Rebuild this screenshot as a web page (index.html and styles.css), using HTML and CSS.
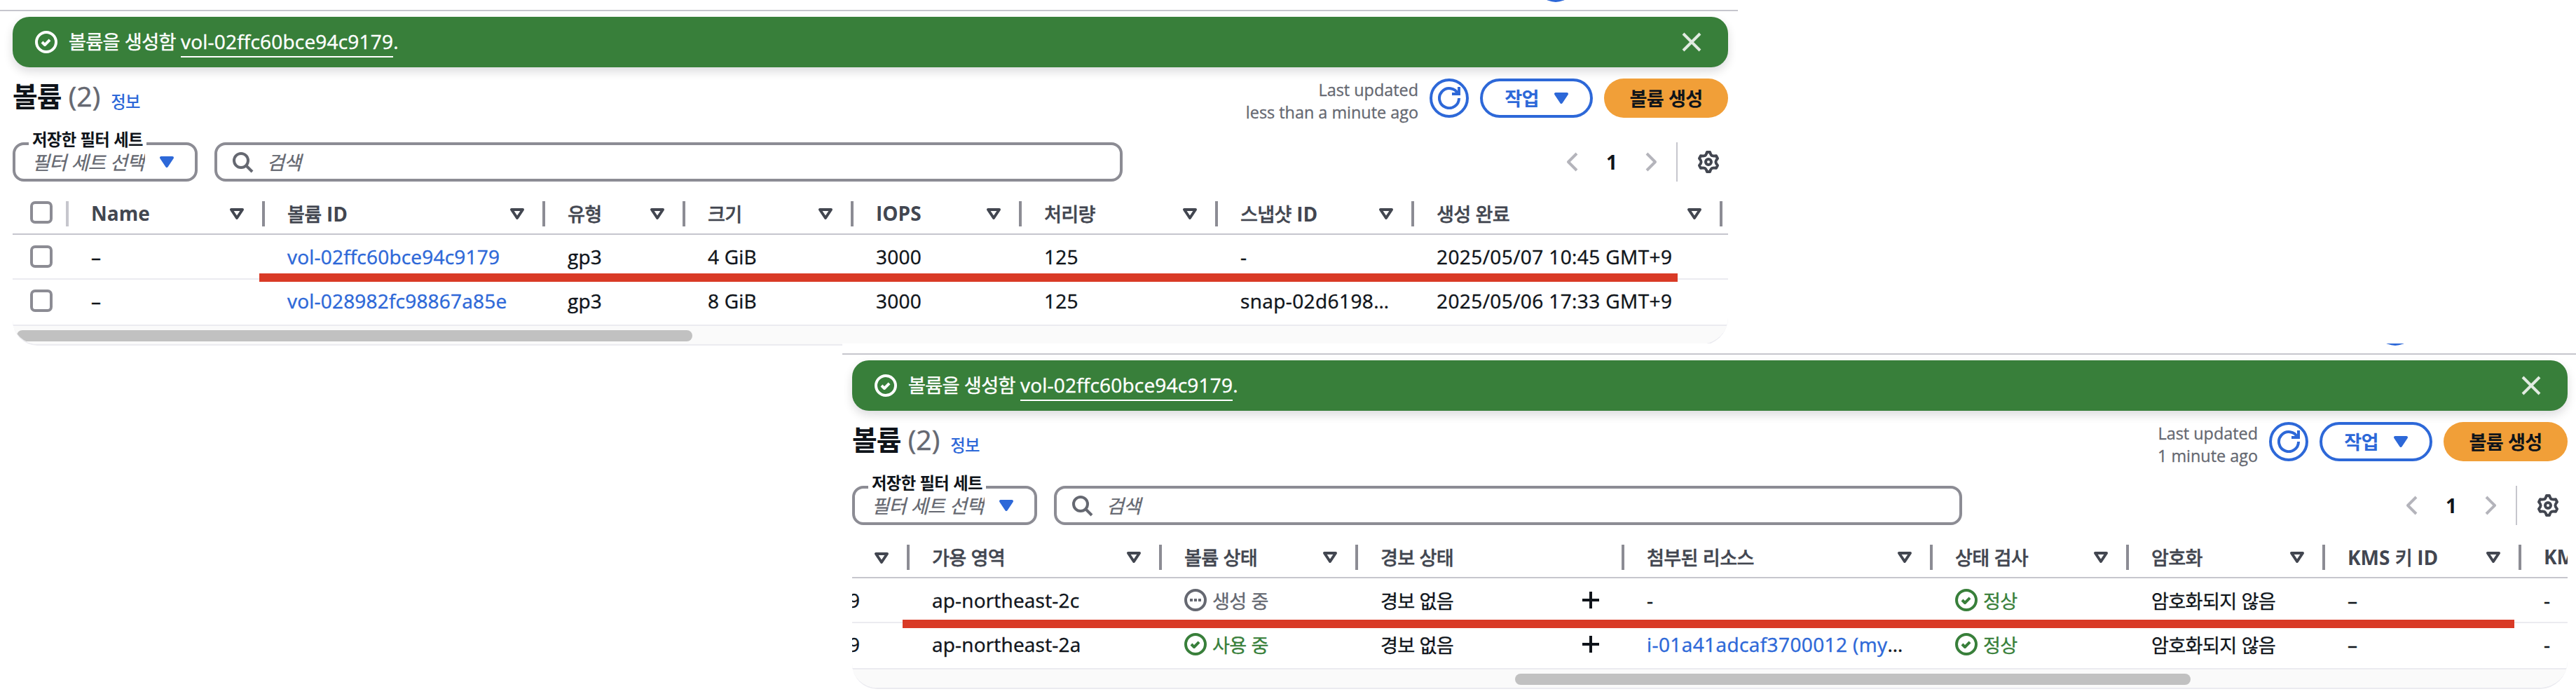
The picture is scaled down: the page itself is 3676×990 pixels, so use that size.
FILE: index.html
```
<!DOCTYPE html>
<html lang="ko">
<head>
<meta charset="utf-8">
<title>볼륨</title>
<link rel="stylesheet" href="styles.css">
</head>
<body>
<svg class="sprite" aria-hidden="true">
  <symbol id="ok" viewBox="0 0 16 16"><circle cx="8" cy="8" r="7"/><path d="m5 8 2 2 3.521-3.521" stroke-linejoin="round"/></symbol>
  <symbol id="pending" viewBox="0 0 16 16"><circle cx="8" cy="8" r="7"/><path class="solid" d="M4 7h2v2H4zM7 7h2v2H7zM10 7h2v2h-2z"/></symbol>
  <symbol id="close" viewBox="0 0 16 16"><path d="m2 2 12 12M14 2 2 14"/></symbol>
  <symbol id="refresh" viewBox="0 0 16 16"><path d="M10 5h5V0"/><path d="M15 8a7 7 0 1 1-.7-3"/></symbol>
  <symbol id="caret" viewBox="0 0 16 16"><path class="both" d="M4 5h8l-4 6z"/></symbol>
  <symbol id="sort" viewBox="0 0 16 16"><path d="M4 5h8l-4 6z" stroke-linejoin="round"/></symbol>
  <symbol id="search" viewBox="0 0 16 16"><circle cx="7" cy="7" r="5"/><path d="m15 15-4.5-4.5"/></symbol>
  <symbol id="left" viewBox="0 0 16 16"><path d="M11 2 5 8l6 6" stroke-linejoin="round"/></symbol>
  <symbol id="right" viewBox="0 0 16 16"><path d="m5 2 6 6-6 6" stroke-linejoin="round"/></symbol>
  <symbol id="plus" viewBox="0 0 16 16"><path d="M8 2v12M2 8h12"/></symbol>
  <symbol id="gear" viewBox="0 0 16 16"><path stroke-linejoin="round" d="M7 1h2Q9.8 3.3 10.6 3.5 11.4 3.9 13.5 3.6L14.5 5.5Q13.2 7.1 13.2 8T14.5 10.5L13.5 12.4Q11.4 12.1 10.6 12.5 9.8 12.7 9 15H7Q6.2 12.7 5.4 12.5 4.6 12.1 2.5 12.4L1.5 10.5Q2.8 8.9 2.8 8T1.5 5.5L2.5 3.6Q4.6 3.9 5.4 3.5 6.2 3.3 7 1z"/><circle cx="8" cy="8" r="2"/></symbol>
</svg>

<section class="panel first">
  <div class="topbar"><i class="orb"></i></div>
  <div class="flash"><svg class="ic"><use href="#ok"/></svg><p><span class="k">볼륨을 생성함</span> <a>vol-02ffc60bce94c9179</a>.</p><svg class="ic x"><use href="#close"/></svg></div>
  <header class="head">
    <h2><span class="k">볼륨</span> <em>(2)</em></h2><a class="info k">정보</a>
    <p class="updated">Last updated<br>less than a minute ago</p>
    <button class="btn round"><svg class="ic"><use href="#refresh"/></svg></button>
    <button class="btn menu"><span class="k">작업</span><svg class="ic"><use href="#caret"/></svg></button>
    <button class="btn primary"><span class="k">볼륨 생성</span></button>
  </header>
  <div class="filters">
    <div class="select"><label class="k">저장한 필터 세트</label><span class="ph k">필터 세트 선택</span><svg class="ic"><use href="#caret"/></svg></div>
    <div class="search"><svg class="ic"><use href="#search"/></svg><span class="ph k">검색</span></div>
    <nav class="pager"><svg class="ic"><use href="#left"/></svg><b>1</b><svg class="ic"><use href="#right"/></svg></nav>
    <div class="prefs"><svg class="ic"><use href="#gear"/></svg></div>
  </div>
  <div class="table">
    <div class="row th">
      <div class="check"><i></i></div>
      <div>Name<svg class="ic"><use href="#sort"/></svg></div>
      <div><span><span class="k">볼륨</span> ID</span><svg class="ic"><use href="#sort"/></svg></div>
      <div><span class="k">유형</span><svg class="ic"><use href="#sort"/></svg></div>
      <div><span class="k">크기</span><svg class="ic"><use href="#sort"/></svg></div>
      <div>IOPS<svg class="ic"><use href="#sort"/></svg></div>
      <div><span class="k">처리량</span><svg class="ic"><use href="#sort"/></svg></div>
      <div><span><span class="k">스냅샷</span> ID</span><svg class="ic"><use href="#sort"/></svg></div>
      <div><span class="k">생성 완료</span><svg class="ic"><use href="#sort"/></svg></div>
    </div>
    <div class="row">
      <div class="check"><i></i></div>
      <div>–</div><div><a>vol-02ffc60bce94c9179</a></div><div>gp3</div><div>4 GiB</div><div>3000</div><div>125</div><div>-</div><div class="date">2025/05/07 10:45 GMT+9</div>
    </div>
    <div class="row last">
      <div class="check"><i></i></div>
      <div>–</div><div><a>vol-028982fc98867a85e</a></div><div>gp3</div><div>8 GiB</div><div>3000</div><div>125</div><div class="date">snap-02d6198…</div><div class="date">2025/05/06 17:33 GMT+9</div>
    </div>
    <div class="track"><i></i></div>
  </div>
  <div class="mark"></div>
</section>

<section class="panel second">
  <div class="topbar"><i class="orb"></i></div>
  <div class="flash"><svg class="ic"><use href="#ok"/></svg><p><span class="k">볼륨을 생성함</span> <a>vol-02ffc60bce94c9179</a>.</p><svg class="ic x"><use href="#close"/></svg></div>
  <header class="head">
    <h2><span class="k">볼륨</span> <em>(2)</em></h2><a class="info k">정보</a>
    <p class="updated">Last updated<br>1 minute ago</p>
    <button class="btn round"><svg class="ic"><use href="#refresh"/></svg></button>
    <button class="btn menu"><span class="k">작업</span><svg class="ic"><use href="#caret"/></svg></button>
    <button class="btn primary"><span class="k">볼륨 생성</span></button>
  </header>
  <div class="filters">
    <div class="select"><label class="k">저장한 필터 세트</label><span class="ph k">필터 세트 선택</span><svg class="ic"><use href="#caret"/></svg></div>
    <div class="search"><svg class="ic"><use href="#search"/></svg><span class="ph k">검색</span></div>
    <nav class="pager"><svg class="ic"><use href="#left"/></svg><b>1</b><svg class="ic"><use href="#right"/></svg></nav>
    <div class="prefs"><svg class="ic"><use href="#gear"/></svg></div>
  </div>
  <div class="table">
    <div class="row th">
      <div class="cut"><svg class="ic"><use href="#sort"/></svg></div>
      <div><span class="k">가용 영역</span><svg class="ic"><use href="#sort"/></svg></div>
      <div><span class="k">볼륨 상태</span><svg class="ic"><use href="#sort"/></svg></div>
      <div><span class="k">경보 상태</span></div>
      <div><span class="k">첨부된 리소스</span><svg class="ic"><use href="#sort"/></svg></div>
      <div><span class="k">상태 검사</span><svg class="ic"><use href="#sort"/></svg></div>
      <div><span class="k">암호화</span><svg class="ic"><use href="#sort"/></svg></div>
      <div><span>KMS <span class="k">키</span> ID</span><svg class="ic"><use href="#sort"/></svg></div>
      <div class="open">KMS</div>
    </div>
    <div class="row">
      <div class="cut">9</div><div>ap-northeast-2c</div>
      <div class="st pend"><svg class="ic"><use href="#pending"/></svg><span class="k">생성 중</span></div>
      <div><span class="k">경보 없음</span><svg class="ic add"><use href="#plus"/></svg></div>
      <div>-</div>
      <div class="st good"><svg class="ic"><use href="#ok"/></svg><span class="k">정상</span></div>
      <div><span class="k">암호화되지 않음</span></div><div>–</div><div>-</div>
    </div>
    <div class="row last">
      <div class="cut">9</div><div>ap-northeast-2a</div>
      <div class="st good"><svg class="ic"><use href="#ok"/></svg><span class="k">사용 중</span></div>
      <div><span class="k">경보 없음</span><svg class="ic add"><use href="#plus"/></svg></div>
      <div class="date"><a>i-01a41adcaf3700012 (my</a>…</div>
      <div class="st good"><svg class="ic"><use href="#ok"/></svg><span class="k">정상</span></div>
      <div><span class="k">암호화되지 않음</span></div><div>–</div><div>-</div>
    </div>
    <div class="track"><i></i></div>
  </div>
  <div class="mark"></div>
</section>
</body>
</html>
```
FILE: styles.css
```
* { box-sizing: border-box; margin: 0; }
body {
  width: 3676px; height: 990px; overflow: hidden; background: #fff; color: #0f141a;
  font: 400 28px/40px "Open Sans", "Noto Sans CJK KR", sans-serif;
}
.sprite { display: none; }
.ic { width: 32px; height: 32px; flex: none; fill: none; stroke: currentColor; stroke-width: 2; }
.solid { fill: currentColor; stroke: none; }
.both { fill: currentColor; stroke-linejoin: round; }
.k { font-family: "Noto Sans CJK KR", sans-serif; font-size: .97em; letter-spacing: -.025em; line-height: 36px; }
a { color: #2d68d8; white-space: nowrap; }
i { font-style: normal; }

.panel { position: relative; height: 490px; background: #fff; }
.first { width: 2480px; padding: 0 14px 0 18px; }
.second { width: 2474px; height: 500px; margin-left: 1202px; padding: 0 12px 0 14px; }

.topbar { height: 16px; margin: 0 -14px 0 -18px; border-bottom: 2px solid #c6c6cd; overflow: hidden; position: relative; }
.orb { position: absolute; right: 232px; top: -53px; width: 56px; height: 56px; border-radius: 50%; background: #2d68d8; }
.second .topbar { margin: 0 -12px 0 -14px; }
.second .orb { right: 230px; }

.flash { display: flex; align-items: center; width: 2448px; height: 72px; margin-top: 8px; padding: 0 36px 0 32px; border-radius: 24px; background: #387f3a; color: #fff; box-shadow: 0 6px 14px rgba(0, 7, 22, .14); }
.flash p { margin: 0 0 3px 16px; white-space: nowrap; -webkit-text-stroke: .4px; }
.flash a { color: #fff; border-bottom: 2px solid #fff; padding-bottom: 2px; letter-spacing: .2px; }
.flash .x { margin-left: auto; color: #e1ebe1; }

.head { display: flex; width: 2448px; height: 80px; margin-top: 8px; align-items: flex-start; white-space: nowrap; }
h2 { font-size: 40px; line-height: 56px; font-weight: 700; margin-top: 5px; }
h2 em { font-style: normal; font-weight: 400; font-size: 39px; color: #656871; -webkit-text-stroke: .5px; }
.info { font-size: 23.3px; line-height: 32px; margin: 24px 0 0 15px; font-weight: 500; }
.updated { margin: 8px 16px 0 auto; font-size: 23.4px; line-height: 32px; text-align: right; color: #656871; -webkit-text-stroke: .3px; }
.btn { height: 56px; margin-top: 8px; border: 4px solid #2d68d8; border-radius: 28px; background: #fff; color: #2d68d8; font: inherit; font-weight: 700; padding: 0; display: flex; align-items: center; justify-content: center; }
.btn .k { margin-bottom: 2px; }
.btn + .btn { margin-left: 16px; }
.round { width: 56px; }
.menu { width: 161px; }
.menu .ic { margin: 0 -6px 0 16px; }
.primary { width: 177px; border: 0; background: #f19f38; color: #0f141a; }

.filters { display: flex; width: 2448px; height: 56px; margin-top: 19px; align-items: center; }
.select, .search { position: relative; display: flex; align-items: center; height: 56px; border: 4px solid #8c8c94; border-radius: 16px; }
.select { width: 264px; padding-left: 24px; }
.select label { position: absolute; left: 19px; top: -23px; padding: 0 5px; background: #fff; font-size: 23.3px; line-height: 28px; font-weight: 700; white-space: nowrap; }
.select .ph { width: 161px; overflow: hidden; }
.select .ic { margin-left: 15px; color: #2d68d8; }
.ph { font-style: italic; color: #656871; white-space: nowrap; margin-bottom: 2px; -webkit-text-stroke: .3px; }
.search { width: 1296px; margin-left: 24px; padding-left: 20px; color: #656871; }
.search .ph { margin-left: 19px; }
.pager { display: flex; align-items: center; margin-left: auto; color: #b4b4bb; }
.pager b { width: 80px; text-align: center; color: #0f141a; }
.prefs { display: flex; align-items: center; height: 56px; margin-left: 20px; padding: 0 12px 0 28px; border-left: 2px solid #c6c6cd; color: #424650; }

.table { width: 2448px; margin-top: 10px; border-bottom: 2px solid #ebebf0; border-radius: 0 0 40px 36px; overflow: hidden; }
.row { display: grid; height: 64px; border-bottom: 2px solid #ebebf0; white-space: nowrap; letter-spacing: .2px; -webkit-text-stroke: .4px; }
.first .row { grid-template-columns: 80px 280px 400px 200px 240px 240px 280px 280px 440px; }
.second .row { grid-template-columns: 82px 360px 280px 380px 440px 280px 280px 280px 66px; }
.row > div { display: flex; align-items: center; padding-left: 32px; }
.row > .date { letter-spacing: .4px; }
.row.last { height: 66px; padding-bottom: 4px; }
.row.th { height: 66px; border-bottom-color: #c6c6cd; color: #424650; font-weight: 700; padding: 18px 0 10px; line-height: 32px; letter-spacing: 0; -webkit-text-stroke: 0; }
.th .k { line-height: 32px; font-weight: 500; -webkit-text-stroke: .4px; }
.th > div { border-right: 4px solid #8c8c94; height: 36px; padding-bottom: 2px; }
.th > .open { border: 0; }
.th .ic { margin: 2px 20px 0 auto; }
.row > .check { padding-left: 25px; border-right-color: #c6c6cd; align-items: center; }
.th > .check { align-items: flex-start; }
.check i { width: 32px; height: 32px; border: 4px solid #8c8c94; border-radius: 7px; }
.row > .cut { padding: 0; text-indent: -5px; }
.st .ic { margin-right: 8px; }
.row:not(.th) .k { margin-bottom: 1px; -webkit-text-stroke: .3px; }
.pend { color: #656871; }
.good { color: #387f3a; }
.add { margin: 0 32px 0 auto; }
.track { height: 26px; padding: 6px 6px 0; background: #fafafa; }
.track i { display: block; width: 964px; height: 16px; border-radius: 8px; background: #c1c1c1; }
.second .track i { margin-left: 940px; }

.mark { position: absolute; left: 370px; top: 390px; width: 2024px; height: 12px; background: #d93a26; }
.second .mark { left: 86px; top: 394px; width: 2300px; }
```
